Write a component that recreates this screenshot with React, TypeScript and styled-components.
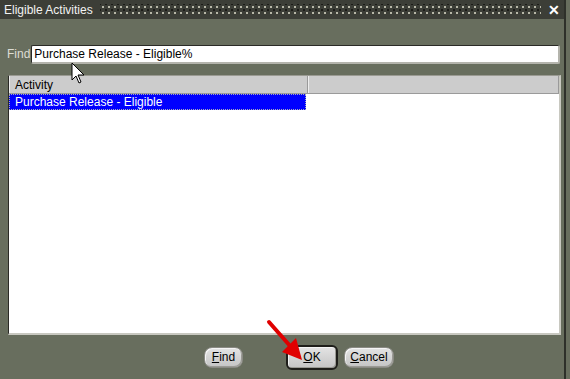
import React from "react";
import styled, { createGlobalStyle } from "styled-components";

const Global = createGlobalStyle`
  html, body { margin: 0; padding: 0; }
  body { width: 570px; height: 379px; overflow: hidden; background: #686e5e; font-family: "Liberation Sans", Arial, sans-serif; }
`;

const Window = styled.div`
  width: 566px;
  height: 379px;
  background: #686e5e;
  border-right: 2px solid #2e302a;
  display: flex;
  flex-direction: column;
  position: relative;
  box-sizing: border-box;
`;

const TitleBar = styled.div`
  height: 19px;
  background: #3c3e37;
  display: flex;
  align-items: center;
  padding: 0 4px 0 4px;
  gap: 7px;
`;

const Title = styled.span`
  color: #f2f2f2;
  font-size: 12px;
  white-space: nowrap;
`;

const Dots = styled.div`
  flex: 1;
  height: 11px;
  background-image:
    radial-gradient(circle, #b8b8a8 0.8px, transparent 1.2px),
    radial-gradient(circle, #1c1c18 0.8px, transparent 1.2px);
  background-size: 6px 6px, 6px 6px;
  background-position: 0 0, 3px 3px;
`;

const Close = styled.span`
  color: #ffffff;
  font-size: 14px;
  font-weight: bold;
  width: 12px;
  text-align: center;
  line-height: 1;
`;

const Body = styled.div`
  flex: 1;
  display: flex;
  flex-direction: column;
  padding: 25px 4px 0 8px;
`;

const FindRow = styled.div`
  display: flex;
  align-items: center;
  height: 20px;
  margin-left: -1px;
`;

const Label = styled.span`
  color: #dcdcd4;
  font-size: 12px;
  margin-right: 1px;
`;

const Input = styled.div`
  flex: 1;
  height: 19px;
  background: #ffffff;
  border-top: 1px solid #2a2a26;
  border-left: 1px solid #2a2a26;
  border-right: 2px solid #b4b4ac;
  border-bottom: 2px solid #b4b4ac;
  box-sizing: border-box;
  font-size: 12px;
  color: #000;
  padding-left: 2px;
  display: flex;
  align-items: center;
  border-radius: 2px;
`;

const Table = styled.div`
  margin-top: 11px;
  height: 260px;
  width: 553px;
  background: #ffffff;
  border-top: 1px solid #9a9a92;
  border-left: 1px solid #2a2a26;
  border-right: 2px solid #c8c8c0;
  border-bottom: 2px solid #c8c8c0;
  box-sizing: border-box;
  display: flex;
  flex-direction: column;
`;

const Header = styled.div`
  display: flex;
  height: 17px;
  background: #cccccc;
  border-bottom: 1px solid #9a9a9a;
`;

const HeaderCell = styled.div<{ $w?: number }>`
  ${(p) => (p.$w ? `width: ${p.$w}px;` : "flex: 1;")}
  font-size: 12px;
  color: #000;
  padding-left: 5px;
  display: flex;
  align-items: center;
  border-right: 1px solid #9a9a9a;
  border-left: 1px solid #eeeeee;
  box-sizing: border-box;
`;

const Row = styled.div`
  display: flex;
  height: 16px;
`;

const Cell = styled.div<{ $selected?: boolean }>`
  width: 297px;
  background: ${(p) => (p.$selected ? "#0000ff" : "transparent")};
  color: ${(p) => (p.$selected ? "#ffffff" : "#000")};
  font-size: 12px;
  padding-left: 5px;
  display: flex;
  align-items: center;
  box-sizing: border-box;
  border: 1px dotted #aab;
`;

const Buttons = styled.div`
  display: flex;
  align-items: center;
  height: 26px;
  margin-top: 9px;
  padding-left: 196px;
`;

const Button = styled.div<{ $default?: boolean; $w: number }>`
  width: ${(p) => p.$w}px;
  height: 21px;
  box-sizing: border-box;
  background: linear-gradient(#e4e4e4, #c4c4c4);
  border: 1px solid #8a8a84;
  border-radius: 8px;
  font-size: 12px;
  color: #000;
  display: flex;
  align-items: center;
  justify-content: center;
  box-shadow: inset -1px -1px 0 #9a9a94, inset 1px 1px 0 #f4f4f4;
  ${(p) =>
    p.$default
      ? `height: 25px; border: 2px solid #1e1e1a; border-radius: 6px;`
      : ""}
`;

const Spacer = styled.div<{ $w: number }>`
  width: ${(p) => p.$w}px;
`;

const U = styled.span`
  text-decoration: underline;
`;

const Overlay = styled.svg`
  position: absolute;
  left: 0;
  top: 0;
  pointer-events: none;
`;

export default function App() {
  return (
    <>
      <Global />
      <Window>
        <TitleBar>
          <Title>Eligible Activities</Title>
          <Dots />
          <Close>✕</Close>
        </TitleBar>
        <Body>
          <FindRow>
            <Label>Find</Label>
            <Input>Purchase Release - Eligible%</Input>
          </FindRow>
          <Table>
            <Header>
              <HeaderCell $w={299}>Activity</HeaderCell>
              <HeaderCell />
            </Header>
            <Row>
              <Cell $selected>Purchase Release - Eligible</Cell>
            </Row>
          </Table>
          <Buttons>
            <Button $w={39}>
              <U>F</U>ind
            </Button>
            <Spacer $w={43} />
            <Button $w={52} $default>
              <U>O</U>K
            </Button>
            <Spacer $w={6} />
            <Button $w={50}>
              <U>C</U>ancel
            </Button>
          </Buttons>
        </Body>
        <Overlay width={570} height={379} viewBox="0 0 570 379">
          <path d="M72 63 L72 80 L76 76 L79 83 L81 82 L78 75 L84 75 Z" fill="#fff" stroke="#000" strokeWidth="1" />
          <line x1="269" y1="322" x2="291" y2="347" stroke="#e00000" strokeWidth="4" strokeLinecap="round" />
          <path d="M302 360 L282 352 L296 338 Z" fill="#e00000" />
        </Overlay>
      </Window>
    </>
  );
}
